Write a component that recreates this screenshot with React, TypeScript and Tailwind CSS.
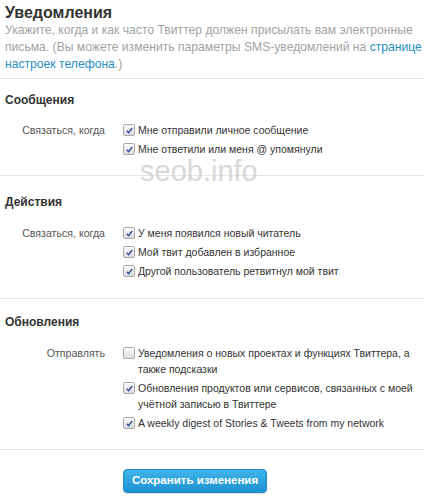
import React from 'react';

type Item = { text: string; checked: boolean };

type Section = {
  title: string;
  label: string;
  items: Item[];
  pt: string;
  pb: string;
  gap: string;
};

const sections: Section[] = [
  {
    title: 'Сообщения',
    label: 'Связаться, когда',
    pt: 'pt-[13px]',
    pb: 'pb-[18px]',
    gap: 'mt-[14px]',
    items: [
      { text: 'Мне отправили личное сообщение', checked: true },
      { text: 'Мне ответили или меня @ упомянули', checked: true },
    ],
  },
  {
    title: 'Действия',
    label: 'Связаться, когда',
    pt: 'pt-[18px]',
    pb: 'pb-[19px]',
    gap: 'mt-[15px]',
    items: [
      { text: 'У меня появился новый читатель', checked: true },
      { text: 'Мой твит добавлен в избранное', checked: true },
      { text: 'Другой пользователь ретвитнул мой твит', checked: true },
    ],
  },
  {
    title: 'Обновления',
    label: 'Отправлять',
    pt: 'pt-[15px]',
    pb: 'pb-[18px]',
    gap: 'mt-[15px]',
    items: [
      { text: 'Уведомления о новых проектах и функциях Твиттера, а также подсказки', checked: false },
      { text: 'Обновления продуктов или сервисов, связанных с моей учётной записью в Твиттере', checked: true },
      { text: 'A weekly digest of Stories & Tweets from my network', checked: true },
    ],
  },
];

function CheckBox({ checked }: { checked: boolean }) {
  return (
    <span className="mt-[2px] flex h-[12px] w-[12px] shrink-0 items-center justify-center rounded-[2px] border border-[#a9a9a9] bg-gradient-to-b from-[#fdfdfd] to-[#dcdcdc]">
      {checked && (
        <svg viewBox="0 0 10 10" className="h-[9px] w-[9px]">
          <path d="M2 5.2 L4 7.4 L8 2.2" fill="none" stroke="#2c4b9a" strokeWidth="1.5" />
        </svg>
      )}
    </span>
  );
}

export default function App() {
  return (
    <div className="relative w-[424px] min-h-[498px] bg-white text-[#333] font-['Liberation_Sans',Arial,sans-serif]">
      {/* Header */}
      <div className="pl-[5px] pt-[4px] pb-[5px] border-b border-[#e6e6e6]">
        <h1 className="text-[16px] leading-[18px] font-bold text-[#333]">Уведомления</h1>
        <p className="text-[12.15px] leading-[17px] text-[#a3a3a3]">
          Укажите, когда и как часто Твиттер должен присылать вам электронные письма. (Вы можете изменить параметры
          SMS-уведомлений на <span className="text-[#2a8fbf]">странице настроек телефона</span>.)
        </p>
      </div>

      {sections.map((s) => (
        <div key={s.title} className={`px-[5px] ${s.pt} ${s.pb} border-b border-[#e6e6e6]`}>
          <h2 className="text-[12px] leading-[16px] font-bold text-[#333]">{s.title}</h2>
          <div className={`${s.gap} flex`}>
            <div className="w-[100px] shrink-0 text-right text-[10.6px] leading-[16px] text-[#555]">{s.label}</div>
            <div className="ml-[18px] flex flex-1 flex-col gap-[3px]">
              {s.items.map((it) => (
                <label key={it.text} className="flex gap-[3px] text-[10.5px] leading-[16px] text-[#333]">
                  <CheckBox checked={it.checked} />
                  <span className="flex-1">{it.text}</span>
                </label>
              ))}
            </div>
          </div>
        </div>
      ))}

      {/* Footer */}
      <div className="pl-[123px] pt-[17px] pb-[6px]">
        <button className="h-[24px] w-[144px] whitespace-nowrap rounded-[4px] border border-[#1f8bc6] bg-gradient-to-b from-[#3fb4ea] to-[#1b92d2] text-[11.5px] font-bold text-white shadow-[0_1px_1px_rgba(0,0,0,0.15)]">
          Сохранить изменения
        </button>
      </div>

      {/* Watermark */}
      <div className="pointer-events-none absolute left-[140px] top-[156px] text-[29px] leading-[30px] text-[#cfcfcf] opacity-80">
        seob.info
      </div>
    </div>
  );
}
